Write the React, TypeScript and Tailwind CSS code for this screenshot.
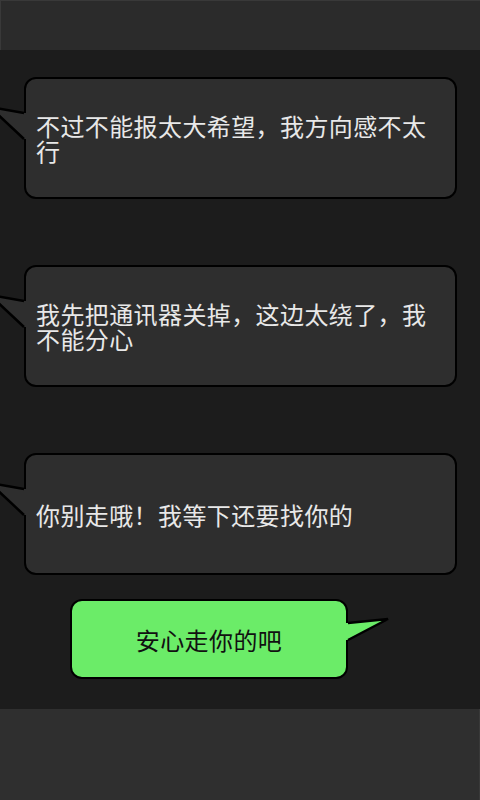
import React from 'react'

const font = { fontFamily: '"Noto Sans CJK SC", "Noto Sans", sans-serif' }

const messages = [
  '不过不能报太大希望，我方向感不太行',
  '我先把通讯器关掉，这边太绕了，我不能分心',
  '你别走哦！我等下还要找你的',
]

function LeftTail() {
  return (
    <svg
      width="48"
      height="48"
      viewBox="0 0 48 48"
      className="absolute left-[-42px] top-[20px] z-10"
    >
      <polygon points="6,8 40,14 44,14 44,40 40,40" fill="#2e2e2e" />
      <polyline points="40,14 6,8 40,40" fill="none" stroke="#000" strokeWidth="2.5" strokeLinejoin="miter" />
    </svg>
  )
}

function RightTail() {
  return (
    <svg
      width="50"
      height="32"
      viewBox="0 0 50 32"
      className="absolute left-[calc(100%-2px)] top-[14px] z-10"
    >
      <polygon points="0,8 4,8 44,4 4,25 0,25" fill="#6bec68" />
      <polyline points="4,8 44,4 4,25" fill="none" stroke="#000" strokeWidth="2.5" strokeLinejoin="miter" />
    </svg>
  )
}

function IncomingBubble({ text }: { text: string }) {
  return (
    <div className="relative ml-[24px] flex h-[122px] w-[433px] items-center rounded-[12px] border-2 border-black bg-[#2e2e2e] pl-[10px] pr-[19px]">
      <LeftTail />
      <p className="text-[24px] leading-[25px] tracking-[0.4px] text-[#e8e8e8]">{text}</p>
    </div>
  )
}

export default function App() {
  return (
    <div style={font} className="flex min-h-screen w-full flex-col bg-[#1c1c1c] overflow-hidden">
      {/* title bar */}
      <div className="h-[50px] w-full border-l border-t border-[#393939] bg-[#2b2b2b]" />

      <div className="flex flex-1 flex-col gap-[66px] pt-[27px]">
        {messages.map((m, i) => (
          <IncomingBubble key={i} text={m} />
        ))}
      </div>

      <div className="mt-[24px] mb-[30px]">
        <div className="relative ml-[70px] flex h-[80px] w-[278px] items-center justify-center rounded-[12px] border-2 border-black bg-[#6bec68]">
          <RightTail />
          <p className="text-[24px] leading-[25px] tracking-[0.4px] text-[#111]">安心走你的吧</p>
        </div>
      </div>

      {/* input bar */}
      <div className="h-[91px] w-full border-r border-[#393939] bg-[#2f2f2f]" />
    </div>
  )
}
